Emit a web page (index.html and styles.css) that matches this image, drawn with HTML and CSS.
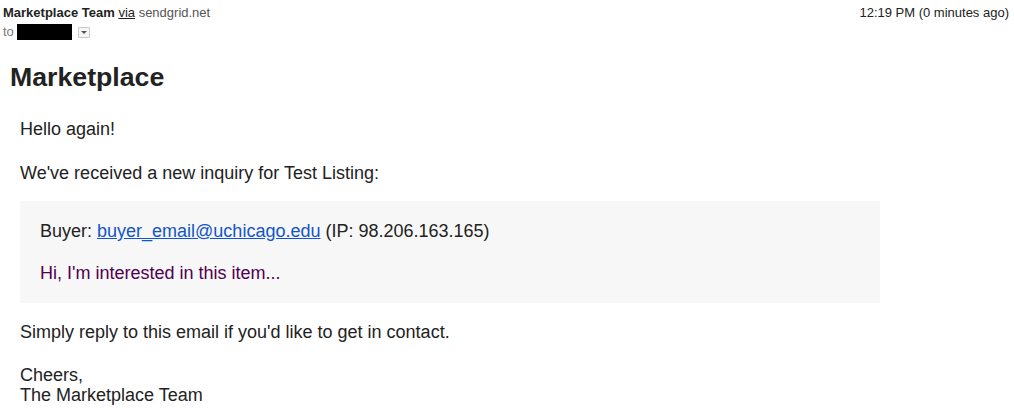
FILE: index.html
```html
<!DOCTYPE html>
<html>
<head>
<meta charset="utf-8">
<link rel="stylesheet" href="styles.css">
</head>
<body>
<div class="header">
  <div class="meta">
    <div class="from"><b class="sender">Marketplace Team</b> <span class="via">via</span> sendgrid.net</div>
    <div class="to"><span class="to-label">to</span><span class="redacted"></span><span class="dropdown"><svg width="8" height="5" viewBox="0 0 8 5"><path d="M1 1h6L4 4z" fill="#555"/></svg></span></div>
  </div>
  <div class="time">12:19 PM (0 minutes ago)</div>
</div>
<h1 class="title">Marketplace</h1>
<div class="content">
  <p class="para greet">Hello again!</p>
  <p class="para">We've received a new inquiry for Test Listing:</p>
  <div class="inquiry">
    <p class="para">Buyer: <a class="link" href="#">buyer_email@uchicago.edu</a> (IP: 98.206.163.165)</p>
    <p class="para quoted">Hi, I'm interested in this item...</p>
  </div>
  <p class="para reply">Simply reply to this email if you'd like to get in contact.</p>
  <p class="para sign">Cheers,<br>The Marketplace Team</p>
</div>
</body>
</html>
```

FILE: styles.css
```css
html, body {
  margin: 0;
  padding: 0;
  background: #fff;
}
body {
  font-family: "Liberation Sans", Arial, sans-serif;
  color: #222;
}
.header {
  display: flex;
  justify-content: space-between;
  padding: 5px 5px 0 3px;
  font-size: 13px;
  line-height: 16px;
}
.sender {
  color: #222;
}
.from {
  color: #555;
}
.via {
  color: #222;
  text-decoration: underline;
}
.to {
  display: flex;
  align-items: center;
  height: 18px;
  margin-top: 2px;
  color: #777;
}
.to-label {
  margin-right: 3px;
}
.redacted {
  display: inline-block;
  width: 55px;
  height: 16px;
  background: #000;
}
.dropdown {
  display: inline-flex;
  align-items: center;
  justify-content: center;
  box-sizing: border-box;
  width: 12px;
  height: 11px;
  margin-left: 6px;
  border: 1px solid #c8c8c8;
  border-radius: 1px;
  background: #f5f5f5;
}
.time {
  color: #222;
}
.title {
  margin: 21px 0 0 10px;
  font-size: 26.7px;
  line-height: 30px;
  font-weight: bold;
  color: #222;
}
.content {
  padding-left: 20px;
  padding-top: 27px;
  font-size: 18px;
  line-height: 20px;
}
.para {
  margin: 0;
}
.greet {
  margin-bottom: 24px;
}
.inquiry {
  width: 860px;
  box-sizing: border-box;
  margin-top: 18px;
  padding: 20px 20px 20px;
  background: #f7f7f7;
}
.inquiry .quoted {
  margin-top: 22px;
  color: #500050;
}
.link {
  color: #15c;
  text-decoration: underline;
}
.reply {
  margin-top: 19px;
  margin-bottom: 23px;
}
```
